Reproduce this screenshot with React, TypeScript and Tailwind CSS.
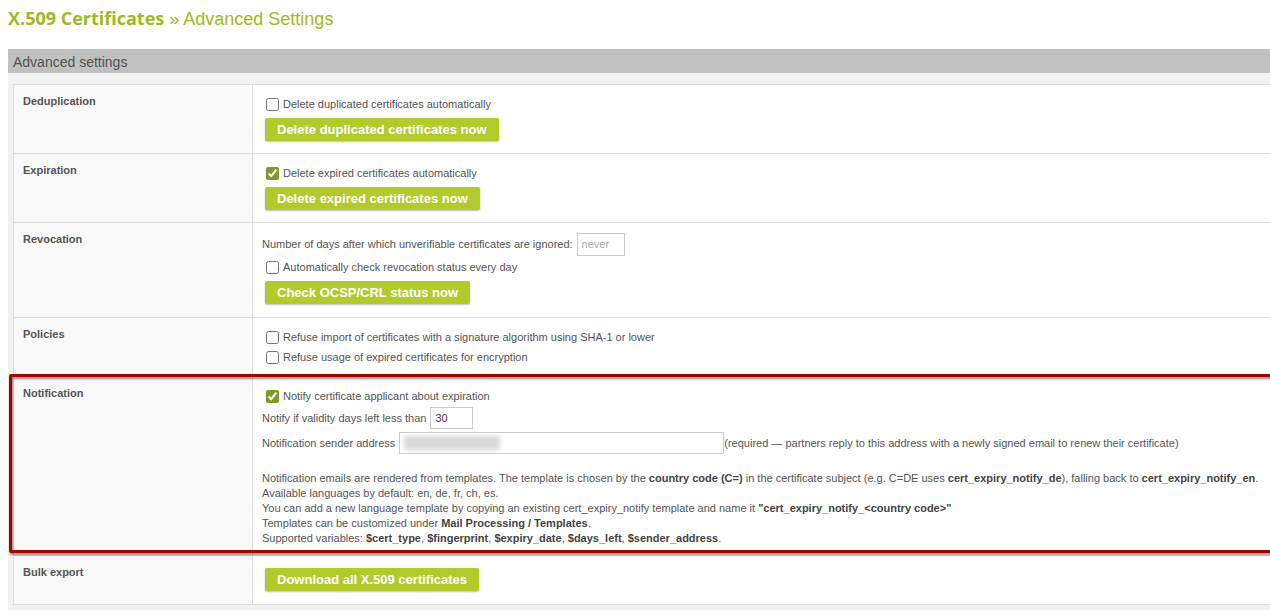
import type { ReactNode } from "react";

const Check = ({ checked = false, label }: { checked?: boolean; label: string }) => (
    <label className="flex h-[19px] items-center pt-[2px]">
        <input
            type="checkbox"
            defaultChecked={checked}
            className="ml-[4px] mr-[4px] h-[13px] w-[13px] accent-[#7f9a2b]"
        />
        <span>{label}</span>
    </label>
);

const GreenButton = ({ children, className = "" }: { children: ReactNode; className?: string }) => (
    <button
        type="button"
        className={`ml-[3px] flex h-[23px] items-center rounded-[2px] bg-[#b3ca2c] px-[12px] text-[13px] font-bold text-white shadow-[0_1px_2px_rgba(0,0,0,0.25)] ${className}`}
    >
        {children}
    </button>
);

const Row = ({
    title,
    children,
    pb = "pb-[12px]",
}: {
    title: string;
    children: ReactNode;
    pb?: string;
}) => (
    <div className="flex">
        <div className="w-[239px] shrink-0 border-r border-[#ddd] bg-[#f9f9f9] pl-[9px] pt-[9px] text-[11px] font-bold leading-[15px] text-[#555]">
            {title}
        </div>
        <div className={`flex-1 pl-[9px] pt-[9px] ${pb}`}>{children}</div>
    </div>
);

const B = ({ children }: { children: ReactNode }) => (
    <b className="font-bold text-[#444]">{children}</b>
);

export default function App() {
    return (
        <div className="h-[616px] w-[1270px] overflow-hidden bg-white font-['Liberation_Sans',Arial,sans-serif] text-[11px] text-[#555]">
            <div className="ml-[8px] mt-[6px] h-[24px] whitespace-nowrap text-[18px] leading-[24px] text-[#9cba24]">
                <span className="font-['Open_Sans',sans-serif] font-bold">X.509 Certificates</span>
                <span> » Advanced Settings</span>
            </div>

            <div className="ml-[8px] mt-[19px] w-[1300px]">
                <div className="h-[24px] bg-[#c0c0c0] pl-[5px] pt-[1px] text-[14px] leading-[24px] text-[#555]">
                    Advanced settings
                </div>
                <div className="bg-[#f1f1f1] pb-[5px] pl-[5px] pt-[11px]">
                    <div className="divide-y divide-[#ddd] border border-[#ddd] bg-white leading-[15px]">
                        <Row title="Deduplication">
                            <Check label="Delete duplicated certificates automatically" />
                            <GreenButton className="mt-[5px]">Delete duplicated certificates now</GreenButton>
                        </Row>

                        <Row title="Expiration">
                            <Check checked label="Delete expired certificates automatically" />
                            <GreenButton className="mt-[5px]">Delete expired certificates now</GreenButton>
                        </Row>

                        <Row title="Revocation" pb="pb-[13px]">
                            <div className="flex h-[24px] items-center">
                                <span>Number of days after which unverifiable certificates are ignored:</span>
                                <input
                                    readOnly
                                    placeholder="never"
                                    className="ml-[4px] h-[23px] w-[48px] border border-[#ccc] px-[4px] text-[11px] text-[#555] outline-none placeholder:text-[#aaa]"
                                />
                            </div>
                            <div className="mt-[1px]">
                                <Check label="Automatically check revocation status every day" />
                            </div>
                            <GreenButton className="mt-[5px]">Check OCSP/CRL status now</GreenButton>
                        </Row>

                        <Row title="Policies" pb="pb-[10px]">
                            <Check label="Refuse import of certificates with a signature algorithm using SHA-1 or lower" />
                            <div className="mt-[1px]">
                                <Check label="Refuse usage of expired certificates for encryption" />
                            </div>
                        </Row>

                        <div className="relative">
                            <Row title="Notification" pb="pb-[9px]">
                                <Check checked label="Notify certificate applicant about expiration" />
                                <div className="mt-[1px] flex h-[24px] items-center">
                                    <span>Notify if validity days left less than</span>
                                    <input
                                        readOnly
                                        defaultValue="30"
                                        className="ml-[4px] h-[22px] w-[43px] border border-[#ccc] px-[4px] text-[11px] text-[#444] outline-none"
                                    />
                                </div>
                                <div className="mt-[1px] flex h-[24px] items-center whitespace-nowrap">
                                    <span>Notification sender address</span>
                                    <div className="ml-[4px] flex h-[22px] w-[325px] items-center border border-[#ccc] bg-white pl-[4px]">
                                        <div className="h-[14px] w-[96px] bg-[#d9d9d9] blur-[2px]" />
                                    </div>
                                    <span>
                                        (required — partners reply to this address with a newly signed email to renew
                                        their certificate)
                                    </span>
                                </div>
                                <div className="mt-[16px] whitespace-nowrap leading-[15px]">
                                    <div>
                                        Notification emails are rendered from templates. The template is chosen by the{" "}
                                        <B>country code (C=)</B> in the certificate subject (e.g. C=DE uses{" "}
                                        <B>cert_expiry_notify_de</B>), falling back to <B>cert_expiry_notify_en</B>.
                                    </div>
                                    <div>Available languages by default: en, de, fr, ch, es.</div>
                                    <div>
                                        You can add a new language template by copying an existing cert_expiry_notify
                                        template and name it <B>"cert_expiry_notify_&lt;country code&gt;"</B>
                                    </div>
                                    <div>
                                        Templates can be customized under <B>Mail Processing / Templates</B>.
                                    </div>
                                    <div>
                                        Supported variables: <B>$cert_type</B>, <B>$fingerprint</B>, <B>$expiry_date</B>,{" "}
                                        <B>$days_left</B>, <B>$sender_address</B>.
                                    </div>
                                </div>
                            </Row>
                            {/* highlight frame around the notification block */}
                            <div className="pointer-events-none absolute -left-[5px] -top-[3px] bottom-[2px] -right-[4px] rounded-[2px] border-[3px] border-[#a50000] drop-shadow-[1px_2px_1px_rgba(0,0,0,0.45)]" />
                        </div>

                        <Row title="Bulk export" pb="pb-[13px]">
                            <GreenButton className="mt-[3px]">Download all X.509 certificates</GreenButton>
                        </Row>
                    </div>
                </div>
            </div>
        </div>
    );
}
